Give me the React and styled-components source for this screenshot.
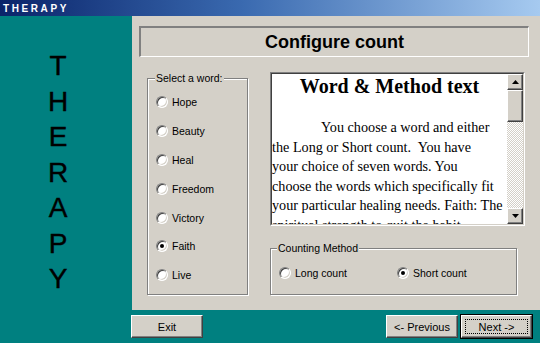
import React from 'react';
import styled, { createGlobalStyle, css } from 'styled-components';

const GlobalStyle = createGlobalStyle`
  html, body {
    margin: 0;
    padding: 0;
    background: #008080;
    overflow: hidden;
  }
  body {
    font-family: "Liberation Sans", Arial, sans-serif;
  }
`;

const words = ['Hope', 'Beauty', 'Heal', 'Freedom', 'Victory', 'Faith', 'Live'];
const letters = ['T', 'H', 'E', 'R', 'A', 'P', 'Y'];
const bodyLines = [
  'You choose a word and either',
  'the Long or Short count.  You have',
  'your choice of seven words. You',
  'choose the words which specifically fit',
  'your particular healing needs. Faith: The',
  'spiritual strength to quit the habit.',
];

const raised = css`
  border-style: solid;
  border-width: 1px;
  border-color: #ffffff #404040 #404040 #ffffff;
  box-shadow: inset -1px -1px 0 #808080;
  background: #d4d0c8;
`;

const Window = styled.div`
  width: 540px;
  height: 343px;
  display: flex;
  flex-direction: column;
  background: #008080;
`;

const TitleBar = styled.div`
  height: 16px;
  flex: none;
  display: flex;
  align-items: center;
  padding-left: 3px;
  background: linear-gradient(to right, #0a246a, #3a6ab0 45%, #a6caf0);
  color: #ffffff;
  font-size: 10px;
  font-weight: bold;
  letter-spacing: 2.6px;
`;

const Body = styled.div`
  flex: 1;
  display: flex;
  min-height: 0;
`;

const Side = styled.div`
  width: 132px;
  flex: none;
  display: flex;
  flex-direction: column;
  align-items: center;
  padding: 32px 16px 0 0;
  box-sizing: border-box;
`;

const Letter = styled.div`
  font-size: 28px;
  line-height: 35.5px;
  color: #000000;
  -webkit-text-stroke: 0.4px #000000;
`;

const Main = styled.div`
  flex: 1;
  display: flex;
  flex-direction: column;
`;

const Panel = styled.div`
  height: 294px;
  flex: none;
  background: #d4d0c8;
  padding: 10px 11px 0 7px;
  box-sizing: border-box;
`;

const Header = styled.div`
  height: 31px;
  box-sizing: border-box;
  border-style: solid;
  border-width: 2px 1px 1px 2px;
  border-color: #808080 #ffffff #ffffff #808080;
  display: flex;
  align-items: center;
  justify-content: center;
  font-size: 18px;
  font-weight: bold;
  color: #000000;
`;

const Content = styled.div`
  display: flex;
  gap: 22px;
  margin-top: 15px;
  padding-left: 8px;
`;

const GroupBox = styled.div`
  position: relative;
  box-sizing: border-box;
  width: ${(p) => p.$width}px;
  height: ${(p) => p.$height}px;
  margin-top: ${(p) => p.$top || 0}px;
  border: 1px solid #808080;
  box-shadow: inset 1px 1px 0 #ffffff, 1px 1px 0 #ffffff;
`;

const Legend = styled.span`
  position: absolute;
  top: -7px;
  left: ${(p) => p.$left}px;
  padding: 0 1px;
  background: #d4d0c8;
  font-size: 10.5px;
  line-height: 12px;
  color: #000000;
`;

const WordList = styled.div`
  display: flex;
  flex-direction: column;
  padding: 9px 0 0 8px;
`;

const RadioRow = styled.label`
  display: flex;
  align-items: center;
  gap: 4px;
  height: ${(p) => p.$h}px;
  width: ${(p) => (p.$w ? `${p.$w}px` : 'auto')};
  font-size: 10.5px;
  color: #000000;
`;

const RadioDot = styled.span`
  position: relative;
  width: 12px;
  height: 12px;
  flex: none;
  box-sizing: border-box;
  border-radius: 50%;
  border: 1px solid;
  border-color: #808080 #ffffff #ffffff #808080;
  box-shadow: inset 1px 1px 0 #404040, inset -1px -1px 0 #d4d0c8;
  background: #ffffff;
  &::after {
    content: '';
    display: ${(p) => (p.$checked ? 'block' : 'none')};
    position: absolute;
    left: 3px;
    top: 3px;
    width: 4px;
    height: 4px;
    border-radius: 50%;
    background: #000000;
  }
`;

const RightCol = styled.div`
  display: flex;
  flex-direction: column;
  gap: 22px;
`;

const Sunken = styled.div`
  width: 255px;
  height: 154px;
  box-sizing: border-box;
  border: 1px solid;
  border-color: #808080 #ffffff #ffffff #808080;
`;

const Well = styled.div`
  height: 100%;
  box-sizing: border-box;
  border: 1px solid;
  border-color: #404040 #d4d0c8 #d4d0c8 #404040;
  background: #ffffff;
  display: flex;
`;

const TextArea = styled.div`
  flex: 1;
  overflow: hidden;
  font-family: "Liberation Serif", "Times New Roman", serif;
  color: #000000;
`;

const DocTitle = styled.div`
  text-align: center;
  font-size: 20px;
  font-weight: bold;
  line-height: 25px;
`;

const DocBody = styled.div`
  margin-top: 19px;
  font-size: 14.2px;
  line-height: 19.5px;
`;

const Line = styled.div`
  white-space: pre;
  padding-left: ${(p) => (p.$indent ? 49 : 0)}px;
`;

const ScrollBar = styled.div`
  width: 16px;
  flex: none;
  display: flex;
  flex-direction: column;
  background: repeating-conic-gradient(#ffffff 0 25%, #d4d0c8 0 50%) 0 0 / 2px 2px;
`;

const ArrowButton = styled.div`
  ${raised};
  width: 16px;
  height: 16px;
  box-sizing: border-box;
  display: flex;
  align-items: center;
  justify-content: center;
  flex: none;
`;

const Thumb = styled.div`
  ${raised};
  width: 16px;
  height: 32px;
  box-sizing: border-box;
  flex: none;
`;

const Track = styled.div`
  flex: 1;
`;

const MethodRow = styled.div`
  display: flex;
  padding: 12px 0 0 8px;
`;

const ButtonBar = styled.div`
  flex: 1;
  display: flex;
  align-items: flex-start;
  padding: 5px 8px 0 0;
  margin-left: -1px;
  gap: 3px;
`;

const Button = styled.button`
  ${raised};
  position: relative;
  width: ${(p) => p.$w}px;
  height: 23px;
  box-sizing: border-box;
  padding: 0;
  margin: 0;
  font-family: "Liberation Sans", Arial, sans-serif;
  font-size: 11px;
  color: #000000;
  margin-right: ${(p) => (p.$push ? 'auto' : '0')};
  ${(p) =>
    p.$focused &&
    css`
      outline: 1px solid #000000;
      outline-offset: 0;
      &::after {
        content: '';
        position: absolute;
        inset: 3px;
        border: 1px dotted #000000;
      }
    `}
`;

function Arrow({ down }) {
  return (
    <svg width="7" height="4" viewBox="0 0 7 4">
      <path d={down ? 'M0 0H7L3.5 4Z' : 'M3.5 0L7 4H0Z'} fill="#000" />
    </svg>
  );
}

function Radio({ label, checked, h, w }) {
  return (
    <RadioRow $h={h} $w={w}>
      <RadioDot $checked={checked} />
      {label}
    </RadioRow>
  );
}

export default function App() {
  return (
    <>
      <GlobalStyle />
      <Window>
        <TitleBar>THERAPY</TitleBar>
        <Body>
          <Side>
            {letters.map((l, i) => (
              <Letter key={i}>{l}</Letter>
            ))}
          </Side>
          <Main>
            <Panel>
              <Header>Configure count</Header>
              <Content>
                <GroupBox $width={101} $height={217} $top={6}>
                  <Legend $left={7}>Select a word:</Legend>
                  <WordList>
                    {words.map((w) => (
                      <Radio key={w} label={w} checked={w === 'Faith'} h={28.8} />
                    ))}
                  </WordList>
                </GroupBox>
                <RightCol>
                  <Sunken>
                    <Well>
                      <TextArea>
                        <DocTitle>Word &amp; Method text</DocTitle>
                        <DocBody>
                          {bodyLines.map((line, i) => (
                            <Line key={i} $indent={i === 0}>
                              {line}
                            </Line>
                          ))}
                        </DocBody>
                      </TextArea>
                      <ScrollBar>
                        <ArrowButton>
                          <Arrow />
                        </ArrowButton>
                        <Thumb />
                        <Track />
                        <ArrowButton>
                          <Arrow down />
                        </ArrowButton>
                      </ScrollBar>
                    </Well>
                  </Sunken>
                  <GroupBox $width={247} $height={47}>
                    <Legend $left={6}>Counting Method</Legend>
                    <MethodRow>
                      <Radio label="Long count" h={24} w={118} />
                      <Radio label="Short count" checked h={24} />
                    </MethodRow>
                  </GroupBox>
                </RightCol>
              </Content>
            </Panel>
            <ButtonBar>
              <Button $w={72} $push>
                Exit
              </Button>
              <Button $w={72}>&lt;- Previous</Button>
              <Button $w={71} $focused>
                Next -&gt;
              </Button>
            </ButtonBar>
          </Main>
        </Body>
      </Window>
    </>
  );
}
